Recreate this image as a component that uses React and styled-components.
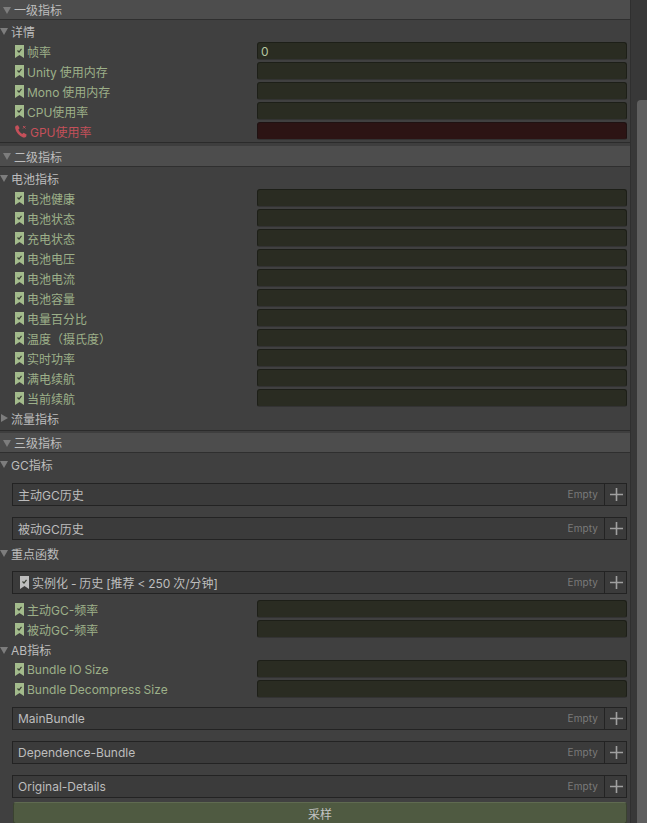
import React from 'react'
import styled, { createGlobalStyle } from 'styled-components'

const FONT = `Inter, "Noto Sans CJK SC", sans-serif`

const GlobalStyle = createGlobalStyle`
  html, body {
    margin: 0;
    height: 823px;
    overflow: hidden;
    background: #383838;
  }
`

const Page = styled.div`
  display: flex;
  width: 647px;
  height: 823px;
  overflow: hidden;
  font-family: ${FONT};
  font-size: 12px;
  word-spacing: -0.5px;
  color: #bdbdbd;
`

const Panel = styled.div`
  width: 631px;
  flex: none;
  background: #3e3e3e;
  border-right: 1px solid #2f2f2f;
  box-sizing: border-box;
`

const Gutter = styled.div`
  flex: none;
  width: 16px;
  padding: 100px 0 0 6px;
  box-sizing: border-box;
  background: #383838;
`

const Thumb = styled.div`
  width: 10px;
  height: 723px;
  background: #5f5f5f;
  border-radius: 4px 0 0 0;
`

const Section = styled.section`
  background: #404040;
  box-sizing: border-box;
  height: ${p => p.$height}px;
  border-bottom: 1px solid #2b2b2b;
  margin-bottom: ${p => p.$gap || 0}px;
`

const Header = styled.div`
  height: ${p => p.$height || 20}px;
  box-sizing: border-box;
  padding-left: 3px;
  display: flex;
  align-items: center;
  gap: 3px;
  background: #4d4d4d;
  border-bottom: 1px solid #2f2f2f;
`

const Arrow = styled.svg`
  width: 8px;
  height: 8px;
  flex: none;
  fill: #7d7d7d;
`

const Group = styled.div`
  height: ${p => p.$height || 20}px;
  margin-top: ${p => p.$top || 0}px;
  padding-bottom: ${p => (p.$lift ? 2 : 0)}px;
  box-sizing: border-box;
  display: flex;
  align-items: center;
  gap: 3px;
`

const Row = styled.div`
  height: 18px;
  margin-bottom: 2px;
  margin-top: ${p => p.$top || 0}px;
  padding: 0 3px 0 15px;
  display: flex;
  align-items: center;
  color: ${p => (p.$error ? '#c5505a' : '#9db089')};
`

const Label = styled.span`
  flex: none;
  width: 230px;
  margin-left: 3px;
  white-space: nowrap;
`

const ErrorLabel = styled(Label)`
  width: 227px;
`

const Field = styled.div`
  flex: 1;
  height: 18px;
  box-sizing: border-box;
  padding-left: 3px;
  line-height: 18px;
  border-radius: 3px;
  border: 1px solid ${p => (p.$error ? '#1f1212' : '#1d1f18')};
  border-bottom-color: #333;
  background: ${p => (p.$error ? '#2c1414' : '#2a2c22')};
  color: #b4c6a0;
`

const ListBox = styled.div`
  height: 23px;
  margin: ${p => p.$top}px 3px 0 12px;
  display: flex;
  align-items: stretch;
  box-sizing: border-box;
  border: 1px solid #232323;
  background: #3b3b3b;
`

const ListTitle = styled.div`
  flex: 1;
  display: flex;
  align-items: center;
  gap: 3px;
  padding-left: ${p => (p.$icon ? 7 : 5)}px;
  white-space: nowrap;
`

const Empty = styled.span`
  align-self: center;
  margin: 0 6px 1px 0;
  font-size: 10px;
  letter-spacing: 0.1px;
  color: #7a7a7a;
`

const AddButton = styled.div`
  width: 22px;
  flex: none;
  padding-left: 1px;
  box-sizing: border-box;
  border-left: 1px solid #232323;
  display: flex;
  align-items: center;
  justify-content: center;
`

const PlusIcon = styled.svg`
  width: 13px;
  height: 13px;
  stroke: #a0a0a0;
  stroke-width: 1.6;
`

const Sample = styled.button`
  display: block;
  width: 614px;
  height: 22px;
  margin: 4px 0 0 13px;
  padding: 0;
  border: 1px solid #3a4230;
  border-top-color: #5f6a50;
  border-radius: 3px;
  background: #4f5a41;
  color: #c4c4c4;
  font: 12px ${FONT};
`

const BookmarkIcon = ({ light }) => (
  <svg width="9" height="13" viewBox="0 0 9 13" style={{ flex: 'none' }}>
    <path d="M0 0H9V13L4.5 10L0 13Z" fill={light ? '#bdbdbd' : '#a3bb8c'} />
    <path d="M2.5 5.5L4 7L6.5 3.8" fill="none" stroke="#3a3f34" strokeWidth="1.2" />
  </svg>
)

const PhoneIcon = () => (
  <svg width="12" height="13" viewBox="0 0 12 13" style={{ flex: 'none' }}>
    <path
      d="M1 .8L3 .3L4.6 3.2L3.4 4.6C3.9 6.4 5.3 8 7.2 8.9L8.6 7.7L11.6 9.6L11.2 11.4C10.6 12.4 9.4 12.8 8.2 12.4C4.4 11.2 1.2 7.8.3 3.6C0 2.4.2 1.4 1 .8Z"
      fill="#c5505a"
    />
    <path d="M8 1L10.5 3.5M10.5 1L8 3.5" stroke="#c5505a" strokeWidth=".9" />
  </svg>
)

const Down = () => (
  <Arrow viewBox="0 0 8 8">
    <path d="M0 1H8L4 8Z" />
  </Arrow>
)

const Right = () => (
  <Arrow viewBox="0 0 8 8">
    <path d="M1 0L8 4L1 8Z" />
  </Arrow>
)

function Metric({ label, value, top }) {
  return (
    <Row $top={top}>
      <BookmarkIcon />
      <Label>{label}</Label>
      <Field>{value}</Field>
    </Row>
  )
}

function ReorderList({ title, top, icon }) {
  return (
    <ListBox $top={top}>
      <ListTitle $icon={icon}>
        {icon && <BookmarkIcon light />}
        {title}
      </ListTitle>
      <Empty>Empty</Empty>
      <AddButton>
        <PlusIcon viewBox="0 0 13 13">
          <path d="M6.5 0V13M0 6.5H13" />
        </PlusIcon>
      </AddButton>
    </ListBox>
  )
}

const BATTERY = [
  '电池健康',
  '电池状态',
  '充电状态',
  '电池电压',
  '电池电流',
  '电池容量',
  '电量百分比',
  '温度（摄氏度）',
  '实时功率',
  '满电续航',
  '当前续航',
]

export default function App() {
  return (
    <>
      <GlobalStyle />
      <Page>
        <Panel>
          <Section $height={143} $gap={3}>
            <Header>
              <Down />
              一级指标
            </Header>
            <Group $top={2} $lift>
              <Down />
              详情
            </Group>
            <Metric label="帧率" value="0" />
            <Metric label="Unity 使用内存" />
            <Metric label="Mono 使用内存" />
            <Metric label="CPU使用率" />
            <Row $error>
              <PhoneIcon />
              <ErrorLabel>GPU使用率</ErrorLabel>
              <Field $error />
            </Row>
          </Section>
          <Section $height={285} $gap={2}>
            <Header $height={21}>
              <Down />
              二级指标
            </Header>
            <Group $top={1}>
              <Down />
              电池指标
            </Group>
            {BATTERY.map((label, i) => (
              <Metric key={label} label={label} top={i === 0 ? 1 : 0} />
            ))}
            <Group $lift>
              <Right />
              流量指标
            </Group>
          </Section>
          <Section $height={395}>
            <Header>
              <Down />
              三级指标
            </Header>
            <Group $top={2} $lift>
              <Down />
              GC指标
            </Group>
            <ReorderList title="主动GC历史" top={8} />
            <ReorderList title="被动GC历史" top={11} />
            <Group $top={3}>
              <Down />
              重点函数
            </Group>
            <ReorderList title="实例化 - 历史 [推荐 < 250 次/分钟]" top={8} icon />
            <Metric label="主动GC-频率" top={6} />
            <Metric label="被动GC-频率" />
            <Group $height={19}>
              <Down />
              AB指标
            </Group>
            <Metric label="Bundle IO Size" top={1} />
            <Metric label="Bundle Decompress Size" />
            <ReorderList title="MainBundle" top={9} />
            <ReorderList title="Dependence-Bundle" top={11} />
            <ReorderList title="Original-Details" top={11} />
            <Sample>采样</Sample>
          </Section>
        </Panel>
        <Gutter>
          <Thumb />
        </Gutter>
      </Page>
    </>
  )
}
